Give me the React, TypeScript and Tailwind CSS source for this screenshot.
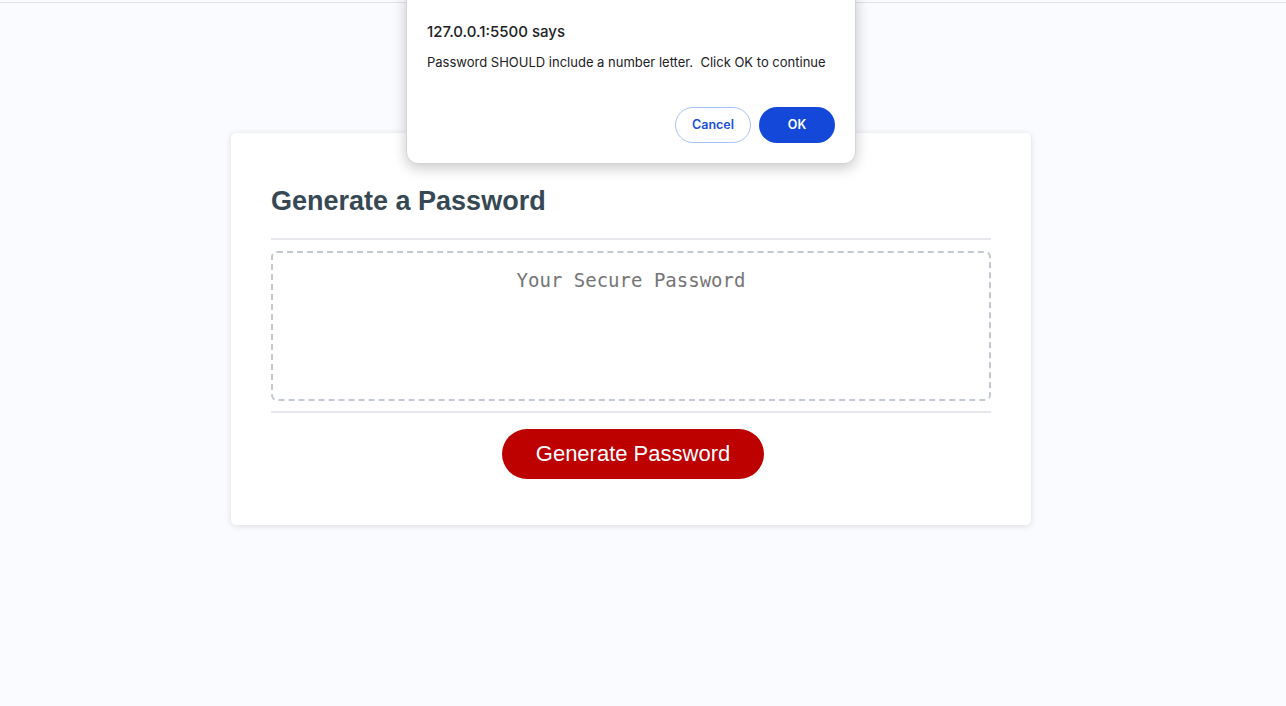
import React from "react";

const AlertDialog = () => {
  return (
    <div className="absolute left-[406px] top-[-14px] w-[450px] h-[175px] rounded-[12px] bg-white border border-[#d4d4d4] shadow-[0_4px_14px_rgba(0,0,0,0.22)] font-['Inter','Noto_Sans',sans-serif]">
      <div className="pl-[20px] pt-[32px]">
        <p className="text-[15px] leading-[20px] font-medium text-[#202124]">127.0.0.1:5500 says</p>
        <p className="mt-[11px] text-[13px] leading-[18px] text-[#202124]">
          Password SHOULD include a number letter.&nbsp; Click OK to continue
        </p>
      </div>
      <div className="absolute right-[20px] bottom-[20px] flex gap-[8px]">
        <button className="w-[76px] h-[36px] rounded-full border border-[#a8c3f7] bg-white text-[12.5px] font-semibold text-[#1a4fd6]">
          Cancel
        </button>
        <button className="w-[76px] h-[36px] rounded-full bg-[#1448d8] text-[12.5px] font-semibold text-white">
          OK
        </button>
      </div>
    </div>
  );
};

const App = () => {
  return (
    <div className="min-h-[706px] bg-[#f9fbfe] relative overflow-hidden">
      <div className="h-[3px] border-b border-[#dfe1e4] bg-[#fafbfc]" />
      <div className="w-[1262px] relative">
        <AlertDialog />
        <div className="flex justify-center pt-[130px]">
          <div className="w-[800px] bg-white rounded-[5px] shadow-[0_1px_6px_rgba(0,0,0,0.13)] px-[40px] pt-[52px] pb-[46px] font-['Liberation_Sans',Arial,sans-serif]">
            <h2 className="text-[27px] leading-[32px] font-bold text-[#364853]">Generate a Password</h2>
            <div className="mt-[21px] h-[2px] bg-[#e6e8ec]" />
            <div className="mt-[11px] h-[150px] rounded-[6px] border-2 border-dashed border-[#c2c9d2] pt-[15px] text-center font-['DejaVu_Sans_Mono','Liberation_Mono',monospace] text-[19px] leading-[24px] text-[#757575]">
              Your Secure Password
            </div>
            <div className="mt-[10px] h-[2px] bg-[#e6e8ec]" />
            <div className="flex justify-center mt-[16px] pl-[4px]">
              <button className="w-[262px] h-[50px] rounded-full bg-[#bd0000] text-white text-[22px] leading-[26px]">
                Generate Password
              </button>
            </div>
          </div>
        </div>
      </div>
    </div>
  );
};

export default App;
